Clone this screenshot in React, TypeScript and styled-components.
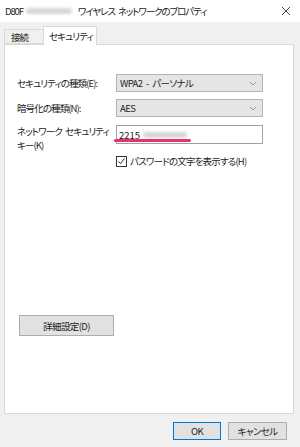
import React from "react";
import styled, { createGlobalStyle } from "styled-components";

const Global = createGlobalStyle`
  html, body { margin: 0; padding: 0; }
  body {
    width: 300px;
    height: 447px;
    overflow: hidden;
    background: #f0f0f0;
    font-family: "Noto Sans CJK JP", "Noto Sans", sans-serif;
    font-size: 9.5px;
    color: #000;
    font-feature-settings: "palt";
    white-space: nowrap;
    word-spacing: 2px;
  }
`;

const Window = styled.div`
  width: 300px;
  height: 447px;
  display: flex;
  flex-direction: column;
  background: #f0f0f0;
`;

const TitleBar = styled.div`
  height: 22px;
  background: #fff;
  display: flex;
  align-items: center;
  padding-left: 5px;
  position: relative;
  font-size: 9.5px;
  letter-spacing: -1.1px;
  color: #222;
`;

const Blur = styled.span<{ $w: number }>`
  display: inline-block;
  width: ${(p) => p.$w}px;
  height: 6px;
  margin: 0 6px 0 3px;
  background: #d6d6d6;
  border-radius: 3px;
  filter: blur(1.5px);
`;

const Close = styled.div`
  position: absolute;
  right: 7px;
  top: 4px;
  width: 14px;
  height: 14px;
`;

const TabStrip = styled.div`
  height: 22px;
  display: flex;
  align-items: flex-end;
  padding-left: 4px;
`;

const Tab = styled.div<{ $active?: boolean }>`
  box-sizing: border-box;
  height: ${(p) => (p.$active ? 19 : 15)}px;
  padding: 0 ${(p) => (p.$active ? 3 : 6)}px 0 ${(p) => (p.$active ? 5 : 6)}px;
  border: 1px solid #d9d9d9;
  border-bottom: ${(p) => (p.$active ? "none" : "1px solid #d9d9d9")};
  background: ${(p) => (p.$active ? "#fff" : "#f0f0f0")};
  margin-bottom: ${(p) => (p.$active ? -1 : 0)}px;
  position: relative;
  z-index: ${(p) => (p.$active ? 1 : 0)};
  display: flex;
  align-items: center;
  font-size: 9.5px;
  letter-spacing: -0.9px;
  color: #222;
  min-width: ${(p) => (p.$active ? 53 : 40)}px;
  margin-left: ${(p) => (p.$active ? -1 : 0)}px;
`;

const Panel = styled.div`
  box-sizing: border-box;
  margin: 0 6px 0 4px;
  height: 370px;
  background: #fff;
  border: 1px solid #d9d9d9;
  padding: 29px 12px 0 12px;
  display: flex;
  flex-direction: column;
`;

const Form = styled.div`
  display: grid;
  grid-template-columns: 99px 147px;
  row-gap: 7px;
  align-items: center;
`;

const Label = styled.div`
  font-size: 9.5px;
  line-height: 14px;
  letter-spacing: -0.9px;
  color: #222;
`;

const Combo = styled.div`
  box-sizing: border-box;
  height: 18px;
  border: 1px solid #b4b4b4;
  background: #e5e5e5;
  display: flex;
  align-items: center;
  justify-content: space-between;
  padding: 0 5px 0 3px;
  font-size: 9.5px;
  letter-spacing: -0.6px;
  color: #222;
`;

const Field = styled.div`
  box-sizing: border-box;
  height: 19px;
  border: 1px solid #a0a0a0;
  background: #fff;
  display: flex;
  align-items: center;
  padding-left: 2px;
  position: relative;
  font-size: 9.5px;
  color: #222;
  align-self: start;
  margin-top: 1px;
`;

const Highlight = styled.div`
  position: absolute;
  left: -3px;
  top: 13px;
  width: 77px;
  height: 3px;
  border-radius: 2px;
  background: #e8316f;
`;

const CheckRow = styled.div`
  display: flex;
  align-items: center;
  gap: 3px;
  margin: 2px 0 0 99px;
  font-size: 9.5px;
  letter-spacing: -0.8px;
  color: #222;
`;

const Box = styled.div`
  box-sizing: border-box;
  width: 11px;
  height: 11px;
  border: 1px solid #333;
  background: #fff;
  display: flex;
  align-items: center;
  justify-content: center;
`;

const Spacer = styled.div`
  flex: 1;
`;

const Button = styled.button<{ $default?: boolean; $w: number; $h?: number }>`
  box-sizing: border-box;
  width: ${(p) => p.$w}px;
  height: ${(p) => p.$h ?? 18}px;
  border: 1px solid ${(p) => (p.$default ? "#0078d7" : "#adadad")};
  background: #e1e1e1;
  font-family: inherit;
  font-feature-settings: "palt";
  font-size: 9.5px;
  letter-spacing: -0.6px;
  color: #222;
  padding: 0;
  display: flex;
  align-items: center;
  justify-content: center;
`;

const AdvancedWrap = styled.div`
  margin: 0 0 77px 2px;
`;

const Footer = styled.div`
  display: flex;
  justify-content: flex-end;
  gap: 7px;
  padding: 8px 13px 0 0;
`;

const Chevron = () => (
  <svg width="8" height="5" viewBox="0 0 8 5">
    <path d="M1 1 L4 4 L7 1" stroke="#999" fill="none" strokeWidth="1" />
  </svg>
);

export default function App() {
  return (
    <>
      <Global />
      <Window>
        <TitleBar>
          D80F
          <Blur $w={46} />
          ワイヤレス ネットワークのプロパティ
          <Close>
            <svg width="14" height="14" viewBox="0 0 14 14">
              <path d="M3 3 L11 11 M11 3 L3 11" stroke="#444" strokeWidth="1" />
            </svg>
          </Close>
        </TitleBar>
        <TabStrip>
          <Tab>接続</Tab>
          <Tab $active>セキュリティ</Tab>
        </TabStrip>
        <Panel>
          <Form>
            <Label>セキュリティの種類(E):</Label>
            <Combo>
              WPA2 - パーソナル
              <Chevron />
            </Combo>
            <Label>暗号化の種類(N):</Label>
            <Combo>
              AES
              <Chevron />
            </Combo>
            <Label>
              ネットワーク セキュリティ
              <br />
              キー(K)
            </Label>
            <Field>
              2215
              <Blur $w={44} />
              <Highlight />
            </Field>
          </Form>
          <CheckRow>
            <Box>
              <svg width="9" height="9" viewBox="0 0 9 9">
                <path d="M1.5 4.5 L3.5 6.5 L7.5 1.5" stroke="#222" fill="none" strokeWidth="1" />
              </svg>
            </Box>
            パスワードの文字を表示する(H)
          </CheckRow>
          <Spacer />
          <AdvancedWrap>
            <Button $w={95} $h={21}>詳細設定(D)</Button>
          </AdvancedWrap>
        </Panel>
        <Footer>
          <Button $default $w={48}>OK</Button>
          <Button $w={59}>キャンセル</Button>
        </Footer>
      </Window>
    </>
  );
}
